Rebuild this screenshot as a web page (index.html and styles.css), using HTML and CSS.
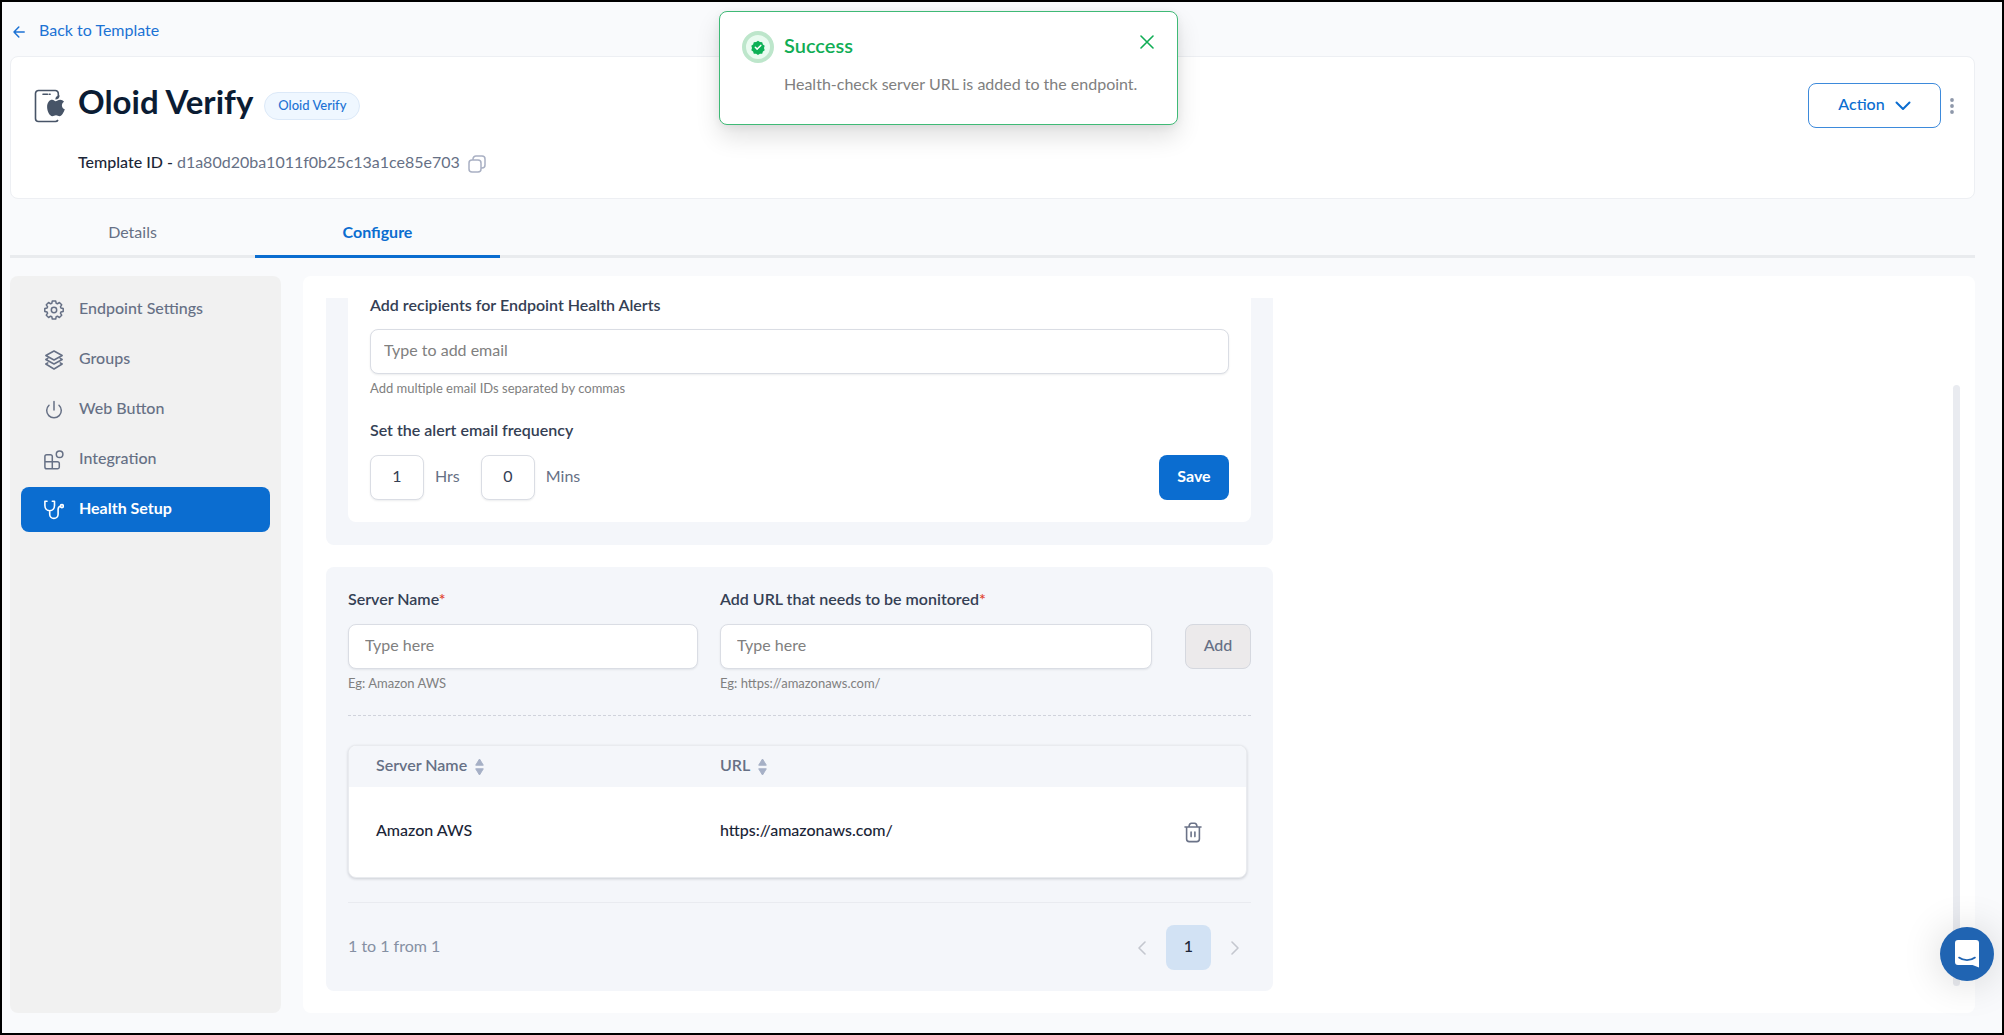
FILE: index.html
```html
<!DOCTYPE html>
<html lang="en">
<head>
<meta charset="utf-8">
<title>Oloid Verify – Health Setup</title>
<link rel="stylesheet" href="styles.css">
</head>
<body>
<div class="app">
  <nav class="back">
    <a href="#" class="back-link">
      <svg width="12" height="12" viewBox="0 0 12 12" fill="none" stroke="currentColor" stroke-width="1.5" stroke-linecap="round" stroke-linejoin="round"><path d="M11.2 6H1M5.8 1 1 6l4.8 5"/></svg>
      <span>Back to Template</span>
    </a>
  </nav>

  <header class="card">
    <svg class="device" width="32" height="34" viewBox="0 0 32 34" fill="none">
      <path d="M24.300 7V4.500a3 3 0 0 0-3-3H4.500a3 3 0 0 0-3 3v25a3 3 0 0 0 3 3h17a3 3 0 0 0 2.500-1.500" stroke="#475467" stroke-width="1.600"/>
      <path d="M9 5.200h4.500M15.300 5.200h.8" stroke="#475467" stroke-width="1.600" stroke-linecap="round"/>
      <path d="M21.600 12.200c1 0 2.500-1.500 4.600-1.500 1.500 0 2.900.7 3.900 2-3.200 1.900-2.800 6.300.7 7.600-.8 2.600-3 6.900-5.200 6.900-1.400 0-2-.9-3.600-.9s-2.300.9-3.700.9c-2.600 0-5.200-5-5.200-9.200 0-4.500 2.400-7.200 5.100-7.200 1.600 0 2.600 1.400 3.400 1.400Z" fill="#475467"/>
      <path d="M21.300 10.600c0-2.500 1.800-4 4.300-4.300.1 2.600-1.600 4.300-4.300 4.300Z" fill="#475467"/>
    </svg>
    <div class="card-text">
      <div class="title-row">
        <h1>Oloid Verify</h1>
        <span class="badge">Oloid Verify</span>
      </div>
      <div class="id-row">
        <span class="id-label">Template ID -</span>
        <span class="id-value">d1a80d20ba1011f0b25c13a1ce85e703</span>
        <button class="icon-btn copy" aria-label="Copy">
          <svg width="18" height="18" viewBox="0 0 18 18" fill="none" stroke="#a9b0c3" stroke-width="1.500"><rect x="1" y="5" width="12" height="12" rx="3"/><path d="M5 5V4a3 3 0 0 1 3-3h6a3 3 0 0 1 3 3v6a3 3 0 0 1-3 3h-1"/></svg>
        </button>
      </div>
    </div>
    <div class="card-actions">
      <button class="btn action">Action
        <svg width="16" height="10" viewBox="0 0 16 10" fill="none" stroke="currentColor" stroke-width="2" stroke-linecap="round" stroke-linejoin="round"><path d="m1.500 1.500 6.500 6.500 6.500-6.500"/></svg>
      </button>
      <button class="icon-btn" aria-label="More">
        <svg width="4" height="16" viewBox="0 0 4 16" fill="#8e98aa"><circle cx="2" cy="2" r="1.900"/><circle cx="2" cy="8" r="1.900"/><circle cx="2" cy="14" r="1.900"/></svg>
      </button>
    </div>
  </header>

  <nav class="tabs">
    <a href="#" class="tab">Details</a>
    <a href="#" class="tab tab-active">Configure</a>
  </nav>

  <div class="body">
    <nav class="side">
      <a href="#" class="side-item">
        <svg width="20" height="20" viewBox="0 0 20 20" fill="none" stroke="currentColor" stroke-width="1.500" stroke-linejoin="round"><circle cx="10" cy="10" r="2.700"/><path d="M8.300 1h3.400l.5 2.300 1.200.5 2-1.300 2.300 2.300-1.300 2 .5 1.200 2.300.5v3l-2.300.5-.5 1.200 1.300 2-2.300 2.300-2-1.300-1.200.5-.5 2.300H8.300l-.5-2.300-1.200-.5-2 1.300-2.300-2.300 1.300-2-.5-1.200L.8 11.500v-3L3.100 8l.5-1.200-1.300-2 2.300-2.300 2 1.300 1.200-.5z"/></svg>
        <span>Endpoint Settings</span>
      </a>
      <a href="#" class="side-item">
        <svg width="20" height="20" viewBox="0 0 20 20" fill="none" stroke="currentColor" stroke-width="1.500" stroke-linejoin="round" stroke-linecap="round"><path d="m10 1 8.200 4.500L10 10 1.800 5.500zM3.800 8.300 1.800 9.500 10 14l8.200-4.500-2-1.200M3.800 12.800l-2 1.200 8.200 5 8.200-5-2-1.200"/></svg>
        <span>Groups</span>
      </a>
      <a href="#" class="side-item">
        <svg width="20" height="20" viewBox="0 0 20 20" fill="none" stroke="currentColor" stroke-width="1.500" stroke-linecap="round"><path d="M10 1.500v8.500M5 5.200a7.300 7.300 0 1 0 10 0"/></svg>
        <span>Web Button</span>
      </a>
      <a href="#" class="side-item">
        <svg width="20" height="20" viewBox="0 0 20 20" fill="none" stroke="currentColor" stroke-width="1.500" stroke-linejoin="round"><circle cx="15.600" cy="4.300" r="3.300"/><path d="M8.300 18.800V6.500a1.800 1.800 0 0 0-1.800-1.800H2.700A1.800 1.800 0 0 0 .9 6.500V17a1.800 1.800 0 0 0 1.800 1.800h10.800a1.800 1.800 0 0 0 1.800-1.800v-3.500a1.800 1.800 0 0 0-1.800-1.800H.9"/></svg>
        <span>Integration</span>
      </a>
      <a href="#" class="side-item side-active">
        <svg width="20" height="20" viewBox="0 0 20 20" fill="none" stroke="currentColor" stroke-width="1.600" stroke-linecap="round" stroke-linejoin="round"><path d="M3 1.200H.9v4.300c0 3 2 5.200 4.800 5.200s4.800-2.200 4.800-5.200V1.200H8.300M5.700 10.700v3.500a4.200 4.200 0 0 0 8.400 0v-4.400c0-2.200 1-3.300 2.300-3.500"/><circle cx="17.900" cy="6.100" r="1.500"/></svg>
        <span>Health Setup</span>
      </a>
    </nav>

    <main class="main">
      <div class="scroll">
        <section class="panel panel-alerts">
          <form class="alerts">
            <label class="label label-top" for="emails">Add recipients for Endpoint Health Alerts</label>
            <input class="field" id="emails" type="text" placeholder="Type to add email">
            <p class="hint">Add multiple email IDs separated by commas</p>
            <h2 class="label">Set the alert email frequency</h2>
            <div class="freq">
              <input class="field num" id="hrs" type="text" value="1">
              <label for="hrs">Hrs</label>
              <input class="field num" id="mins" type="text" value="0">
              <label for="mins">Mins</label>
              <button class="btn save" type="button">Save</button>
            </div>
          </form>
        </section>

        <section class="panel panel-servers">
          <form class="add-form">
            <div>
              <label class="label" for="server">Server Name<span class="req">*</span></label>
              <input class="field" id="server" type="text" placeholder="Type here">
              <p class="hint">Eg: Amazon AWS</p>
            </div>
            <div>
              <label class="label" for="url">Add URL that needs to be monitored<span class="req">*</span></label>
              <input class="field" id="url" type="text" placeholder="Type here">
              <p class="hint">Eg: https://amazonaws.com/</p>
            </div>
            <button class="btn add" type="button" disabled>Add</button>
          </form>

          <div class="table-card">
            <table>
              <thead>
                <tr>
                  <th class="col-name"><span class="sort">Server Name <svg width="9" height="18" viewBox="0 0 9 18" fill="#a6b0c6" stroke="#a6b0c6" stroke-linejoin="round"><path d="M4.500 1 8.300 7.200H.7zM4.500 17 .7 10.800h7.600z"/></svg></span></th>
                  <th><span class="sort">URL <svg width="9" height="18" viewBox="0 0 9 18" fill="#a6b0c6" stroke="#a6b0c6" stroke-linejoin="round"><path d="M4.500 1 8.300 7.200H.7zM4.500 17 .7 10.800h7.600z"/></svg></span></th>
                  <th class="col-del"></th>
                </tr>
              </thead>
              <tbody>
                <tr>
                  <td>Amazon AWS</td>
                  <td>https://amazonaws.com/</td>
                  <td><button class="icon-btn trash" aria-label="Delete">
                    <svg width="18" height="21" viewBox="0 0 18 21" fill="none" stroke="#6b7388" stroke-width="1.600" stroke-linecap="round" stroke-linejoin="round"><path d="M1 5h16M2.600 5v12a2.600 2.600 0 0 0 2.600 2.600h7.600a2.600 2.600 0 0 0 2.600-2.600V5M5 4.500C5.200 2.400 6 1.200 7.400 1.200h3.200C12 1.200 12.800 2.400 13 4.500M7.100 10v4.600M10.900 10v4.600"/></svg>
                  </button></td>
                </tr>
              </tbody>
            </table>
          </div>

          <div class="pager">
            <span>1 to 1 from 1</span>
            <button class="icon-btn" aria-label="Previous page"><svg width="8" height="14" viewBox="0 0 8 14" fill="none" stroke="#c4c7cf" stroke-width="1.600" stroke-linecap="round" stroke-linejoin="round"><path d="M7 1 1 7l6 6"/></svg></button>
            <button class="btn page">1</button>
            <button class="icon-btn" aria-label="Next page"><svg width="8" height="14" viewBox="0 0 8 14" fill="none" stroke="#c4c7cf" stroke-width="1.600" stroke-linecap="round" stroke-linejoin="round"><path d="m1 1 6 6-6 6"/></svg></button>
          </div>
        </section>
      </div>
      <div class="rail"></div>
    </main>
  </div>

  <div class="toast" role="status">
    <svg width="32" height="32" viewBox="0 0 32 32" fill="none"><circle cx="16" cy="16" r="14" fill="#e9fbf0" stroke="#bde6cb" stroke-width="4"/><path d="m16 9.800 1.900 1.300 2.300.1.700 2.200 1.800 1.400-.7 2.200.7 2.200-1.800 1.300-.7 2.200-2.300.1-1.900 1.300-1.900-1.300-2.300-.1-.7-2.200-1.800-1.300.7-2.200-.7-2.200 1.800-1.400.7-2.200 2.300-.1z" fill="#0cb055"/><path d="m13.300 16.200 1.900 1.900 3.600-3.700" stroke="#fff" stroke-width="1.500" stroke-linecap="round" stroke-linejoin="round"/></svg>
    <div class="toast-text">
      <strong>Success</strong>
      <p>Health-check server URL is added to the endpoint.</p>
    </div>
    <button class="icon-btn close" aria-label="Close"><svg width="14" height="14" viewBox="0 0 14 14" fill="none" stroke="#10ad55" stroke-width="1.600" stroke-linecap="round"><path d="m1 1 12 12M13 1 1 13"/></svg></button>
  </div>

  <button class="chat" aria-label="Open chat">
    <svg width="26" height="28" viewBox="0 0 26 28" fill="none"><path d="M4 0h18a3 3 0 0 1 3 3v24.500L18.500 25H4a3 3 0 0 1-3-3V3a3 3 0 0 1 3-3Z" fill="#fff"/><path d="M5 17.500c4.500 3.500 11.500 3.500 16 0" stroke="#2064b2" stroke-width="1.600" stroke-linecap="round"/></svg>
  </button>
</div>
</body>
</html>
```
FILE: styles.css
```css
* { box-sizing: border-box; }
body, h1, h2, p { margin: 0; }
body {
  font-family: Lato, "Liberation Sans", sans-serif;
  font-size: 16px;
  line-height: 20px;
  color: #667085;
}
a { color: inherit; text-decoration: none; }
button, input { font: inherit; color: inherit; }
button { cursor: pointer; }
svg { display: block; flex: none; }

.app {
  position: relative;
  display: flex;
  flex-direction: column;
  min-height: 100vh;
  padding: 0 27px 20px 8px;
  background: #f9fafc;
  border: 2px solid #000;
}

.icon-btn { padding: 0; border: 0; background: none; display: block; }
.btn {
  height: 45px;
  border-radius: 8px;
  border: 1px solid transparent;
  padding: 0 0 4px;
}

/* Back link */
.back { display: flex; padding: 18px 3px 16px; }
.back-link { display: flex; align-items: center; gap: 14px; color: #1c72d4; }
.back-link svg { margin-top: 4px; }

/* Header card */
.card {
  display: flex;
  align-items: flex-start;
  height: 143px;
  padding: 26px 20px 0 23px;
  background: #fff;
  border: 1px solid #edeff3;
  border-radius: 8px;
}
.device { margin-top: 6px; }
.card-text { flex: 1; padding-left: 12px; }
.title-row { display: flex; align-items: center; gap: 11px; }
h1 { padding-bottom: 3px; font-size: 33px; line-height: 37px; font-weight: 700; color: #0b1c33; }
.badge {
  margin-top: 5px;
  padding: 2px 13px 4px;
  font-size: 13px;
  font-weight: 500;
  color: #1c72d4;
  background: #eff7ff;
  border: 1px solid #dce9f8;
  border-radius: 14px;
}
.id-row { display: flex; align-items: center; gap: 4px; margin-top: 28px; }
.id-label { font-weight: 500; color: #1b2537; }
.copy { margin: 4px 0 0 4px; }
.card-actions { display: flex; align-items: center; gap: 9px; }
.action {
  display: flex;
  align-items: center;
  justify-content: center;
  gap: 10px;
  width: 133px;
  font-weight: 500;
  color: #0b6dd0;
  background: #fff;
  border-color: #3d8adb;
}
.action svg { margin-top: 4px; }

/* Tabs */
.tabs { display: flex; margin-top: 15px; border-bottom: 3px solid #e9ebee; }
.tab {
  width: 245px;
  height: 44px;
  padding-top: 8px;
  margin-bottom: -3px;
  text-align: center;
}
.tab-active { color: #0b6dd0; font-weight: 700; border-bottom: 3px solid #0b6dd0; }

/* Body */
.body { display: flex; flex: 1; gap: 22px; margin-top: 18px; }
.side {
  display: flex;
  flex-direction: column;
  gap: 5px;
  width: 271px;
  padding: 11px;
  background: #f1f1f1;
  border-radius: 8px;
}
.side-item {
  display: flex;
  align-items: center;
  gap: 15px;
  height: 45px;
  padding: 0 23px;
  font-weight: 500;
  border-radius: 8px;
}
.side-item span { padding-bottom: 4px; }
.side-active { color: #fff; font-weight: 700; background: #0b6dd0; }

.main {
  display: flex;
  flex: 1;
  padding: 22px 15px 22px 23px;
  background: #fff;
  border-radius: 8px;
}
.scroll { flex: 1; }
.rail { width: 7px; margin: 87px 0 5px; background: #e9ebf0; border-radius: 4px; }

.panel { max-width: 947px; background: #f4f6fa; border-radius: 8px; }
.panel-alerts { padding: 0 22px 23px; border-radius: 0 0 8px 8px; }
.alerts { padding: 0 22px 22px; background: #fff; border-radius: 0 0 8px 8px; }
.panel-servers { margin-top: 22px; padding: 22px 22px 21px; }

.label {
  display: block;
  margin-bottom: 15px;
  font-size: 16px;
  line-height: 20px;
  font-weight: 600;
  color: #344054;
}
.label-top { margin-bottom: 17px; line-height: 14px; }
.req { color: #e0442e; }
.field {
  display: block;
  width: 100%;
  height: 45px;
  padding: 0 16px 4px;
  background: #fff;
  border: 1px solid #dadde4;
  border-radius: 8px;
  box-shadow: 0 1px 2px rgba(16, 24, 40, .08);
}
.field::placeholder { color: #808080; opacity: 1; }
.hint { margin-top: 4px; font-size: 13px; color: #808080; }
.alerts .field { padding-left: 13px; }
.alerts .hint { margin-bottom: 22px; }
.freq { display: flex; align-items: center; gap: 11px; }
.alerts .num { width: 54px; padding: 0 0 4px; text-align: center; color: #344054; }
.freq label { padding-bottom: 4px; }
.freq label:nth-of-type(1) { margin-right: 10px; }
.save { width: 70px; margin-left: auto; font-weight: 700; color: #fff; background: #0b6dd0; }

.add-form {
  display: grid;
  grid-template-columns: 350fr 432fr auto;
  column-gap: 22px;
  padding-bottom: 22px;
  border-bottom: 1px dashed #d0d3dc;
}
.add {
  width: 66px;
  margin: 35px 0 0 11px;
  font-weight: 500;
  color: #667085;
  background: #eceaeb;
  border-color: #d5d8df;
}

.table-card {
  margin: 29px 4px 0 0;
  overflow: hidden;
  background: #fff;
  border: 1px solid #e9ebef;
  border-radius: 8px;
  box-shadow: 0 1px 3px rgba(16, 24, 40, .18);
}
table { width: 100%; border-collapse: collapse; table-layout: fixed; text-align: left; }
th { height: 41px; padding: 0 0 4px; background: #f4f6fa; font-weight: 600; }
td { height: 90px; padding: 0 0 4px; font-weight: 500; color: #1b2537; }
th:first-child, td:first-child { padding-left: 27px; }
.col-name { width: 371px; }
.col-del { width: 62px; }
.sort { display: flex; align-items: center; gap: 8px; }
.sort svg { margin-top: 4px; }
.trash { margin-top: 4px; }

.pager {
  display: flex;
  align-items: center;
  margin-top: 24px;
  padding: 22px 12px 0 0;
  border-top: 1px solid #e9ebf0;
}
.pager span { margin-right: auto; padding-bottom: 4px; color: #8590a3; }
.page { width: 45px; margin: 0 20px; font-weight: 500; color: #1b2537; background: #d2e2f4; }

/* Overlays */
.toast {
  position: absolute;
  top: 9px;
  left: 717px;
  display: flex;
  gap: 10px;
  width: 459px;
  height: 114px;
  padding: 19px 23px 0 22px;
  background: #fff;
  border: 1px solid #3fba76;
  border-radius: 8px;
  box-shadow: 0 12px 24px rgba(0, 0, 0, .12), 0 2px 8px rgba(0, 0, 0, .06);
}
.toast-text { flex: 1; width: 0; white-space: nowrap; }
.toast strong { display: block; padding-top: 3px; font-size: 20px; line-height: 22px; font-weight: 600; color: #10ad55; }
.toast p { margin-top: 18px; color: #808080; }
.close { align-self: flex-start; margin-top: 4px; }
.chat {
  position: fixed;
  right: 10px;
  bottom: 54px;
  display: grid;
  place-items: center;
  width: 54px;
  height: 54px;
  padding: 0;
  background: #2064b2;
  border: 0;
  border-radius: 50%;
  box-shadow: 0 2px 40px rgba(0, 0, 0, .16);
}
```
